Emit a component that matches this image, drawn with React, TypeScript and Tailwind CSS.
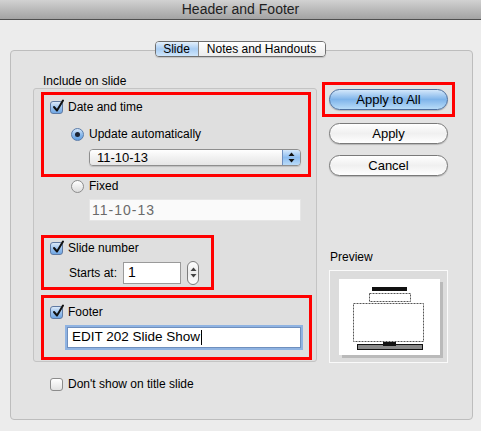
import React from 'react';

const Checkbox: React.FC<{ checked?: boolean }> = ({ checked }) => (
  <span
    className={`relative block w-[13px] h-[13px] shrink-0 rounded-[3px] border ${
      checked
        ? 'border-[#5f7aa3] bg-gradient-to-b from-[#dbe9f8] via-[#9cc3ee] to-[#6fa6e3]'
        : 'border-[#8c8c8c] bg-gradient-to-b from-[#ffffff] to-[#e2e2e2]'
    }`}
  >
    {checked && (
      <svg className="absolute -top-[3px] left-[1px]" width="13" height="14" viewBox="0 0 13 14">
        <path d="M2 8 L5 11.5 L11 1.5" fill="none" stroke="#111" strokeWidth="2" strokeLinecap="round" strokeLinejoin="round" />
      </svg>
    )}
  </span>
);

const Radio: React.FC<{ checked?: boolean }> = ({ checked }) => (
  <span
    className={`flex items-center justify-center w-[13px] h-[13px] shrink-0 rounded-full border ${
      checked
        ? 'border-[#5a7caa] bg-gradient-to-b from-[#d6e7f9] via-[#8dbbec] to-[#5f9de0]'
        : 'border-[#8c8c8c] bg-gradient-to-b from-[#ffffff] to-[#dcdcdc]'
    }`}
  >
    {checked && <span className="block w-[5px] h-[5px] rounded-full bg-[#1c2433]" />}
  </span>
);

const UpDown: React.FC<{ color?: string }> = ({ color = '#111' }) => (
  <svg width="7" height="11" viewBox="0 0 7 11">
    <path d="M3.5 0.5 L6.5 4 L0.5 4 Z" fill={color} />
    <path d="M3.5 10.5 L6.5 7 L0.5 7 Z" fill={color} />
  </svg>
);

const AquaButton: React.FC<{ label: string; primary?: boolean }> = ({ label, primary }) => (
  <div
    className={`flex items-center justify-center w-[119px] h-[21px] rounded-full border text-[13px] text-black shadow-[0_1px_1px_rgba(0,0,0,0.2)] ${
      primary
        ? 'border-[#4d6f9e] bg-gradient-to-b from-[#d3e7fa] via-[#7fb4ea] to-[#b8dcf8]'
        : 'border-[#7a7a7a] bg-gradient-to-b from-[#ffffff] via-[#f0f0f0] to-[#ffffff]'
    }`}
  >
    {label}
  </div>
);

const PreviewDrawing = () => (
  <svg width="117" height="91" viewBox="0 0 117 91">
    <rect x="12" y="11" width="101" height="76" fill="#9e9e9e" opacity="0.55" />
    <rect x="9" y="8" width="101" height="76" fill="#ffffff" />
    <rect x="42" y="16" width="35" height="4" fill="#111" />
    <rect x="39.5" y="22.5" width="41" height="8" fill="none" stroke="#555" strokeWidth="1" strokeDasharray="2 1" />
    <rect x="23.5" y="32.5" width="70" height="38" fill="none" stroke="#555" strokeWidth="1" strokeDasharray="2 1" />
    <rect x="27.5" y="73.5" width="65" height="5" fill="#8a8a8a" stroke="#111" strokeWidth="1" />
    <rect x="53" y="71" width="13" height="4" fill="#111" />
  </svg>
);

export default function App() {
  return (
    <div className="w-[481px] h-[431px] bg-[#ececec] font-['Liberation_Sans',Arial,sans-serif] text-[12px] text-black overflow-hidden flex flex-col">
      <div className="h-[20px] shrink-0 border-b border-[#4f4f4f] bg-gradient-to-b from-[#d2d2d2] to-[#a3a3a3] flex items-center justify-center text-[14px] text-[#1e1e1e]">
        Header and Footer
      </div>

      <div className="pt-[21px] pl-[10px] flex flex-col">
        <div className="relative z-10 -mb-[7px] w-[463px] flex justify-center pr-[3px]">
          <div className="flex h-[16px] rounded-[4px] border border-[#6f6f6f] overflow-hidden text-[12px] shadow-[0_1px_1px_rgba(0,0,0,0.15)]">
            <div className="w-[43px] flex items-center justify-center border-r border-[#8a8a8a] bg-gradient-to-b from-[#e4f0fc] via-[#a9cdf3] to-[#cfe6fb]">
              Slide
            </div>
            <div className="w-[126px] flex items-center justify-center bg-gradient-to-b from-[#ffffff] to-[#ececec]">
              Notes and Handouts
            </div>
          </div>
        </div>

        <div className="w-[463px] h-[370px] rounded-[4px] border border-[#bdbdbd] bg-[#e3e3e3] flex pt-[24px] pl-[22px]">
          {/* left column */}
          <div className="w-[284px] flex flex-col">
            <div className="h-[13px] leading-[13px] pl-[10px]">Include on slide</div>
            <div className="h-[274px] rounded-[3px] border border-[#c4c4c4] bg-[#dfdfdf] flex flex-col pt-[3px] pl-[7px]">
              {/* date and time */}
              <div className="w-[270px] h-[85px] border-[3px] border-[#ff0000] flex flex-col">
                <div className="h-[22px] mt-[1px] flex items-center gap-[5px] pl-[6px]">
                  <Checkbox checked />
                  <span>Date and time</span>
                </div>
                <div className="h-[18px] mt-[7px] flex items-center gap-[5px] pl-[27px]">
                  <Radio checked />
                  <span>Update automatically</span>
                </div>
                <div className="mt-[6px] ml-[45px] w-[212px] h-[17px] flex rounded-[4px] border border-[#8e8e8e] overflow-hidden shadow-[0_1px_1px_rgba(0,0,0,0.15)]">
                  <div className="flex-1 flex items-center pl-[7px] text-[13px] bg-gradient-to-b from-[#ffffff] via-[#f1f1f1] to-[#e6e6e6]">
                    11-10-13
                  </div>
                  <div className="w-[18px] flex items-center justify-center border-l border-[#6f8fbf] bg-gradient-to-b from-[#d5e8fb] via-[#8dbdf0] to-[#b9dbf8]">
                    <UpDown />
                  </div>
                </div>
              </div>

              {/* fixed */}
              <div className="h-[16px] mt-[1px] flex items-center gap-[5px] pl-[30px]">
                <Radio />
                <span>Fixed</span>
              </div>
              <div className="mt-[5px] ml-[48px] w-[212px] h-[22px] bg-[#fafafa] border border-[#e6e6e6] flex items-center pl-[2px] text-[14px] tracking-[1px] text-[#6a6a6a]">
                11-10-13
              </div>

              {/* slide number */}
              <div className="mt-[14px] w-[173px] h-[55px] border-[3px] border-[#ff0000] flex flex-col">
                <div className="h-[20px] flex items-center gap-[5px] pl-[6px]">
                  <Checkbox checked />
                  <span>Slide number</span>
                </div>
                <div className="h-[29px] flex items-center pl-[25px]">
                  <span className="w-[54px]">Starts at:</span>
                  <div className="w-[58px] h-[22px] bg-white border border-[#9a9a9a] flex items-center pl-[4px] text-[14px]">1</div>
                  <div className="ml-[6px] w-[12px] h-[24px] rounded-full border border-[#7d7d7d] bg-gradient-to-b from-[#ffffff] via-[#ececec] to-[#ffffff] flex items-center justify-center">
                    <UpDown color="#444" />
                  </div>
                </div>
              </div>

              {/* footer */}
              <div className="mt-[5px] w-[271px] h-[65px] border-[3px] border-[#ff0000] flex flex-col">
                <div className="mt-[7px] h-[14px] flex items-center gap-[5px] pl-[6px]">
                  <Checkbox checked />
                  <span>Footer</span>
                </div>
                <div className="mt-[8px] ml-[23px] w-[234px] h-[21px] bg-white border border-[#6f8fbd] shadow-[0_0_0_2px_#8fb3e2] flex items-center pl-[4px] text-[13.5px]">
                  EDIT 202 Slide Show
                  <span className="ml-[1px] w-[1px] h-[15px] bg-black" />
                </div>
              </div>
            </div>

            <div className="mt-[15px] h-[14px] flex items-center gap-[5px] pl-[17px]">
              <Checkbox />
              <span>Don't show on title slide</span>
            </div>
          </div>

          {/* right column */}
          <div className="ml-[5px] flex flex-col">
            <div className="mt-[7px] w-[133px] h-[35px] border-[3px] border-[#ff0000] pt-[4px] pl-[4px]">
              <AquaButton label="Apply to All" primary />
            </div>
            <div className="mt-[6px] ml-[7px]">
              <AquaButton label="Apply" />
            </div>
            <div className="mt-[11px] ml-[7px]">
              <AquaButton label="Cancel" />
            </div>
            <div className="mt-[74px] ml-[8px] h-[14px] leading-[14px]">Preview</div>
            <div className="mt-[6px] ml-[7px] w-[119px] h-[93px] border border-[#fafafa] bg-[#dcdcdc]">
              <PreviewDrawing />
            </div>
          </div>
        </div>
      </div>
    </div>
  );
}
